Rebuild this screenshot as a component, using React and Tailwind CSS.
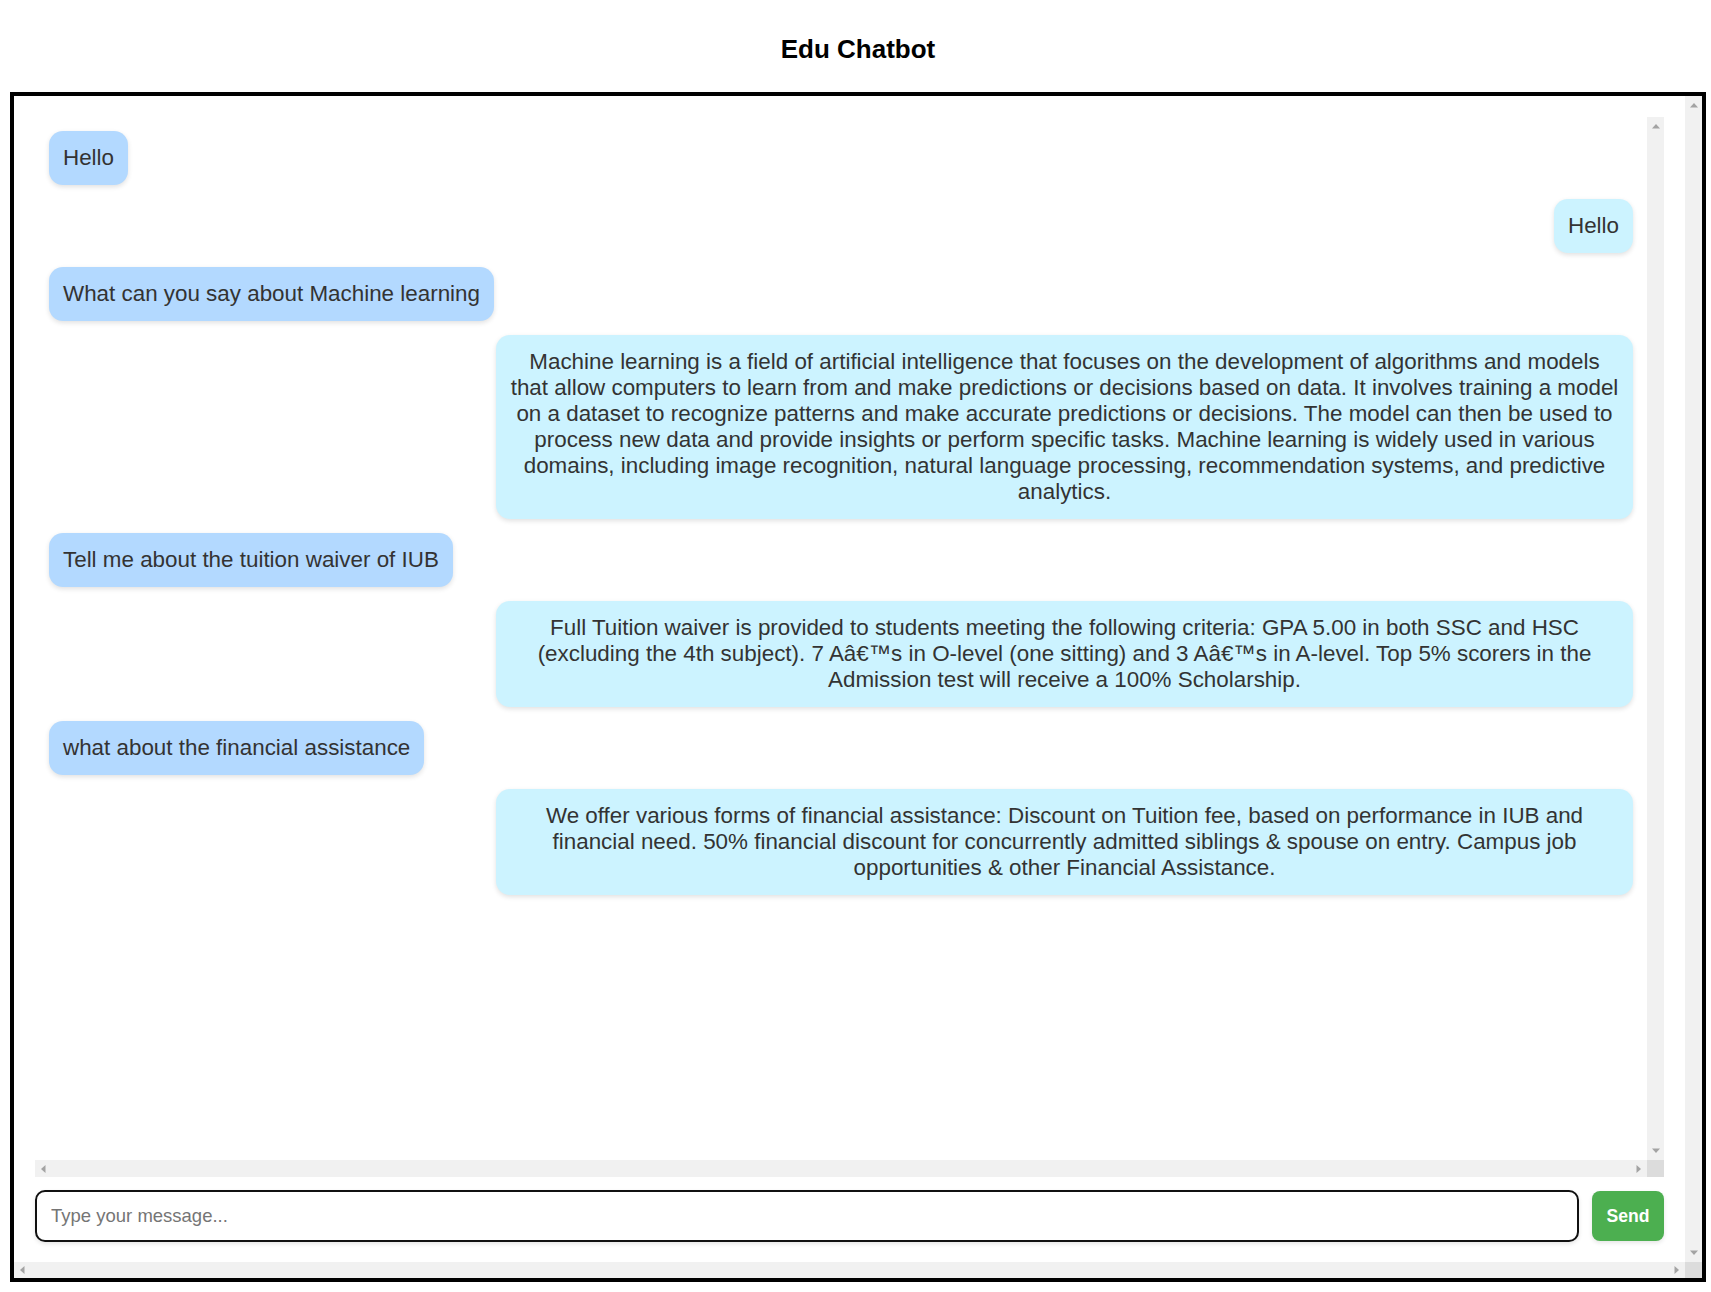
import React from "react";

const FONT = { fontFamily: '"Liberation Sans", Arial, sans-serif' };

function Tri({ dir }) {
  if (dir === "up")
    return (
      <svg width="8" height="5" viewBox="0 0 8 5"><polygon points="0,4.5 8,4.5 4,0" fill="#a3a3a3" /></svg>
    );
  if (dir === "down")
    return (
      <svg width="8" height="5" viewBox="0 0 8 5"><polygon points="0,0.5 8,0.5 4,5" fill="#a3a3a3" /></svg>
    );
  if (dir === "left")
    return (
      <svg width="5" height="8" viewBox="0 0 5 8"><polygon points="4.5,0 4.5,8 0,4" fill="#a3a3a3" /></svg>
    );
  return (
    <svg width="5" height="8" viewBox="0 0 5 8"><polygon points="0.5,0 0.5,8 5,4" fill="#a3a3a3" /></svg>
  );
}

function VScroll() {
  return (
    <div className="w-[17px] shrink-0 bg-[#f1f1f1] flex flex-col items-center justify-between pt-[7px] pb-[7px]">
      <Tri dir="up" />
      <Tri dir="down" />
    </div>
  );
}

function HScroll({ h }) {
  return (
    <div className={"flex shrink-0 " + (h === 16 ? "h-[16px]" : "h-[17px]")}>
      <div className="flex-1 bg-[#f1f1f1] flex items-center justify-between pl-[6px] pr-[6px]">
        <Tri dir="left" />
        <Tri dir="right" />
      </div>
      <div className="w-[17px] bg-[#dcdcdc]" />
    </div>
  );
}

function UserMsg({ children }) {
  return (
    <div className="self-start bg-[#b3d9ff] rounded-[14px] p-[14px] text-[22.4px] leading-[26px] text-[#333] shadow-[0_2px_5px_rgba(0,0,0,0.12)] whitespace-nowrap">
      {children}
    </div>
  );
}

function BotMsg({ children, wide }) {
  return (
    <div
      className={
        "self-end bg-[#ccf3ff] rounded-[14px] p-[14px] text-[22.4px] leading-[26px] text-[#333] text-center shadow-[0_2px_5px_rgba(0,0,0,0.12)] " +
        (wide ? "w-[1137px]" : "whitespace-nowrap")
      }
    >
      {children}
    </div>
  );
}

function Lines({ lines }) {
  return lines.map((l, i) => (
    <div key={i} className="whitespace-nowrap">
      {l}
    </div>
  ));
}

export default function App() {
  return (
    <div className="w-[1711px] h-[1292px] bg-white overflow-hidden" style={FONT}>
      <div className="ml-[10px] w-[1696px] pt-[34px] h-[92px]">
        <h2 className="text-center text-[26px] leading-[30px] font-bold text-black">Edu Chatbot</h2>
      </div>
      <div className="ml-[10px] w-[1696px] h-[1190px] border-4 border-black flex flex-col">
        <div className="flex h-[1166px] shrink-0">
          <div className="flex-1 flex flex-col pt-[21px] pl-[21px] pr-[21px] pb-[20px]">
            <div className="flex flex-col h-[1060px] shrink-0">
              <div className="flex flex-1 min-h-0">
                <div className="flex-1 min-h-0 overflow-hidden flex flex-col gap-[14px] p-[14px]">
                  <UserMsg>Hello</UserMsg>
                  <BotMsg>Hello</BotMsg>
                  <UserMsg>What can you say about Machine learning</UserMsg>
                  <BotMsg wide>
                    <Lines
                      lines={[
                        "Machine learning is a field of artificial intelligence that focuses on the development of algorithms and models",
                        "that allow computers to learn from and make predictions or decisions based on data. It involves training a model",
                        "on a dataset to recognize patterns and make accurate predictions or decisions. The model can then be used to",
                        "process new data and provide insights or perform specific tasks. Machine learning is widely used in various",
                        "domains, including image recognition, natural language processing, recommendation systems, and predictive",
                        "analytics.",
                      ]}
                    />
                  </BotMsg>
                  <UserMsg>Tell me about the tuition waiver of IUB</UserMsg>
                  <BotMsg wide>
                    <Lines
                      lines={[
                        "Full Tuition waiver is provided to students meeting the following criteria: GPA 5.00 in both SSC and HSC",
                        "(excluding the 4th subject). 7 A\u00e2\u20ac\u2122s in O-level (one sitting) and 3 A\u00e2\u20ac\u2122s in A-level. Top 5% scorers in the",
                        "Admission test will receive a 100% Scholarship.",
                      ]}
                    />
                  </BotMsg>
                  <UserMsg>what about the financial assistance</UserMsg>
                  <BotMsg wide>
                    <Lines
                      lines={[
                        "We offer various forms of financial assistance: Discount on Tuition fee, based on performance in IUB and",
                        "financial need. 50% financial discount for concurrently admitted siblings & spouse on entry. Campus job",
                        "opportunities & other Financial Assistance.",
                      ]}
                    />
                  </BotMsg>
                </div>
                <VScroll />
              </div>
              <HScroll h={17} />
            </div>
            <div className="mt-[13px] flex items-center gap-[13px] h-[52px] shrink-0">
              <input
                type="text"
                placeholder="Type your message..."
                className="flex-1 h-[52px] border-2 border-[#111] rounded-[10px] pl-[14px] pr-[14px] text-[18.5px] text-[#333] placeholder:text-[#757575] bg-white shadow-[0_2px_4px_rgba(0,0,0,0.1)] outline-none"
                style={FONT}
              />
              <button
                className="w-[72px] h-[50px] bg-[#4caf50] text-white rounded-[8px] text-[17.6px] font-bold shadow-[0_2px_4px_rgba(0,0,0,0.1)]"
                style={FONT}
              >
                Send
              </button>
            </div>
          </div>
          <VScroll />
        </div>
        <HScroll h={16} />
      </div>
    </div>
  );
}
